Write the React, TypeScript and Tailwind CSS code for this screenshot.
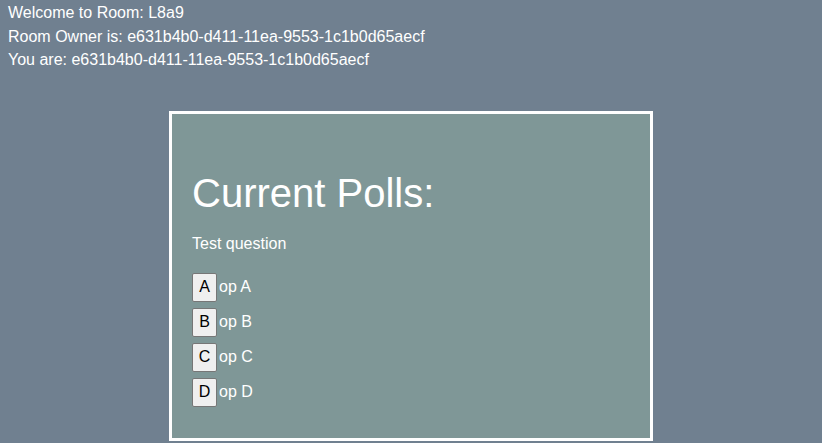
export default function App() {
  const opts = ["A", "B", "C", "D"];
  return (
    <div className="min-h-[443px] w-full bg-[#708090] text-white text-[16px] pt-px" style={{ fontFamily: '"Liberation Sans", Arial, sans-serif' }}>
      <div className="px-[8px] leading-[23.5px]">
        <div>Welcome to Room: L8a9</div>
        <div>Room Owner is: e631b4b0-d411-11ea-9553-1c1b0d65aecf</div>
        <div>You are: e631b4b0-d411-11ea-9553-1c1b0d65aecf</div>
      </div>
      <div className="mx-auto mt-[39px] w-[484px] h-[330px] border-[3px] border-white bg-[#7f9797] px-[20px] pt-[56px]">
        <div className="text-[40px] leading-[46px]">Current Polls:</div>
        <div className="mt-[19px] leading-[18px]">Test question</div>
        <div className="mt-[20px] flex flex-col gap-[6px]">
          {opts.map((o) => (
            <div key={o} className="flex items-center">
              <button className="w-[25px] h-[29px] bg-[#efefef] border border-[#767676] rounded-[2px] text-black text-[16px] leading-none flex items-center justify-center">
                {o}
              </button>
              <span className="ml-[2px]">op {o}</span>
            </div>
          ))}
        </div>
      </div>
    </div>
  );
}
